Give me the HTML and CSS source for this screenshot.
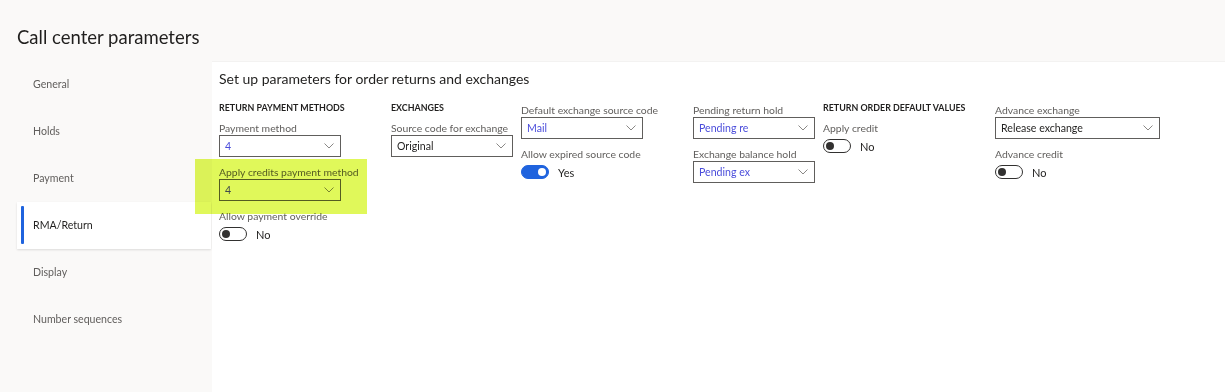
FILE: index.html
```html
<!DOCTYPE html>
<html lang="en">

<head>
    <meta charset="UTF-8">
    <title>Call center parameters</title>
    <link rel="stylesheet" href="styles.css">
</head>

<body>
    <h1 class="page-title">Call center parameters</h1>
    <div class="main">
        <ul class="nav">
            <li class="nav-item"><span class="nav-bar"></span>General</li>
            <li class="nav-item"><span class="nav-bar"></span>Holds</li>
            <li class="nav-item"><span class="nav-bar"></span>Payment</li>
            <li class="nav-item current"><span class="nav-bar"></span>RMA/Return</li>
            <li class="nav-item"><span class="nav-bar"></span>Display</li>
            <li class="nav-item"><span class="nav-bar"></span>Number sequences</li>
        </ul>
        <div class="panel">
            <h2 class="panel-title">Set up parameters for order returns and exchanges</h2>
            <div class="columns">
                <div class="col col-wide">
                    <div class="group-title">RETURN PAYMENT METHODS</div>
                    <div class="field">
                        <label>Payment method</label>
                        <div class="select link">4<svg class="chev" viewBox="0 0 10 6"><path d="M0.5 0.5 L5 5 L9.5 0.5" /></svg></div>
                    </div>
                    <div class="field">
                        <label>Apply credits payment method</label>
                        <div class="select link">4<svg class="chev" viewBox="0 0 10 6"><path d="M0.5 0.5 L5 5 L9.5 0.5" /></svg></div>
                    </div>
                    <div class="field">
                        <label>Allow payment override</label>
                        <div class="toggle-row"><span class="toggle"></span>No</div>
                    </div>
                </div>
                <div class="col col-narrow">
                    <div class="group-title">EXCHANGES</div>
                    <div class="field">
                        <label>Source code for exchange</label>
                        <div class="select">Original<svg class="chev" viewBox="0 0 10 6"><path d="M0.5 0.5 L5 5 L9.5 0.5" /></svg></div>
                    </div>
                </div>
                <div class="col col-wide plain">
                    <div class="field">
                        <label>Default exchange source code</label>
                        <div class="select link">Mail<svg class="chev" viewBox="0 0 10 6"><path d="M0.5 0.5 L5 5 L9.5 0.5" /></svg></div>
                    </div>
                    <div class="field">
                        <label>Allow expired source code</label>
                        <div class="toggle-row"><span class="toggle on"></span>Yes</div>
                    </div>
                </div>
                <div class="col col-narrow plain">
                    <div class="field">
                        <label>Pending return hold</label>
                        <div class="select link">Pending re<svg class="chev" viewBox="0 0 10 6"><path d="M0.5 0.5 L5 5 L9.5 0.5" /></svg></div>
                    </div>
                    <div class="field">
                        <label>Exchange balance hold</label>
                        <div class="select link">Pending ex<svg class="chev" viewBox="0 0 10 6"><path d="M0.5 0.5 L5 5 L9.5 0.5" /></svg></div>
                    </div>
                </div>
                <div class="col col-wide">
                    <div class="group-title">RETURN ORDER DEFAULT VALUES</div>
                    <div class="field">
                        <label>Apply credit</label>
                        <div class="toggle-row"><span class="toggle"></span>No</div>
                    </div>
                </div>
                <div class="col col-big plain">
                    <div class="field">
                        <label>Advance exchange</label>
                        <div class="select">Release exchange<svg class="chev" viewBox="0 0 10 6"><path d="M0.5 0.5 L5 5 L9.5 0.5" /></svg></div>
                    </div>
                    <div class="field">
                        <label>Advance credit</label>
                        <div class="toggle-row"><span class="toggle"></span>No</div>
                    </div>
                </div>
            </div>
        </div>
        <!-- marker highlight over "Apply credits payment method" -->
        <div class="highlight"></div>
    </div>
</body>

</html>
```

FILE: styles.css
```css
* {
    margin: 0;
    padding: 0;
    box-sizing: border-box;
}

body {
    background-color: #faf9f8;
    font-family: Lato, "Noto Sans", sans-serif;
    color: #201f1e;
    height: 392px;
    overflow: hidden;
}

ul {
    list-style: none;
}

.page-title {
    font-size: 18.5px;
    font-weight: 400;
    line-height: 28px;
    padding: 23px 0 10px 17px;
    height: 61px;
}

.main {
    display: flex;
    position: relative;
    height: 331px;
}

.nav {
    width: 212px;
    padding-left: 17px;
    padding-right: 1px;
}

.nav-item {
    height: 47px;
    display: flex;
    align-items: center;
    font-size: 10.6px;
    color: #605e5c;
    padding-bottom: 2px;
}

.nav-bar {
    width: 3px;
    height: 38px;
    margin: 0 9px 0 4px;
    border-radius: 1px;
}

.nav-item.current {
    background-color: #fff;
    color: #201f1e;
    box-shadow: 0 1px 2px rgba(0, 0, 0, .12);
}

.nav-item.current .nav-bar {
    background-color: #1f63de;
}

.panel {
    flex: 1;
    background-color: #fff;
    padding: 7px 0 0 7px;
    border-top: 1px solid #f3f2f1;
}

.panel-title {
    font-size: 14px;
    font-weight: 400;
    line-height: 20px;
    margin-bottom: 12px;
}

.columns {
    display: flex;
}

.col {
    display: flex;
    flex-direction: column;
    gap: 8px;
}

.col-wide {
    width: 172px;
}

.col-narrow {
    width: 130px;
}

.col-big {
    width: 170px;
}

.col.plain {
    padding-top: 2px;
}

.group-title {
    font-size: 8.9px;
    font-weight: 700;
    line-height: 14px;
    margin-bottom: -2px;
}

.field {
    display: flex;
    flex-direction: column;
}

.field label {
    font-size: 10.4px;
    line-height: 14px;
    color: #605e5c;
}

.select {
    width: 122px;
    height: 22px;
    border: 1px solid #605e5c;
    font-size: 10.6px;
    line-height: 20px;
    padding-left: 5px;
    display: flex;
    justify-content: space-between;
    align-items: center;
    color: #201f1e;
}

.col-big .select {
    width: 165px;
}

.select.link {
    color: #4b4ddb;
}

.chev {
    width: 10px;
    height: 6px;
    margin-right: 6px;
    fill: none;
    stroke: #8a8886;
    stroke-width: 1;
}

.toggle-row {
    height: 22px;
    display: flex;
    align-items: center;
    font-size: 11px;
    color: #201f1e;
}

.toggle {
    width: 28px;
    height: 14px;
    border: 1px solid #323130;
    border-radius: 7px;
    margin-right: 9px;
    display: flex;
    align-items: center;
    padding: 0 2px;
}

.toggle::after {
    content: "";
    width: 8px;
    height: 8px;
    border-radius: 50%;
    background-color: #323130;
}

.toggle.on {
    background-color: #1f63de;
    border-color: #1f63de;
    justify-content: flex-end;
}

.toggle.on::after {
    background-color: #fff;
}

.highlight {
    position: absolute;
    left: 195px;
    top: 98px;
    width: 172px;
    height: 55px;
    background-color: #e0f85a;
    mix-blend-mode: multiply;
}
```
